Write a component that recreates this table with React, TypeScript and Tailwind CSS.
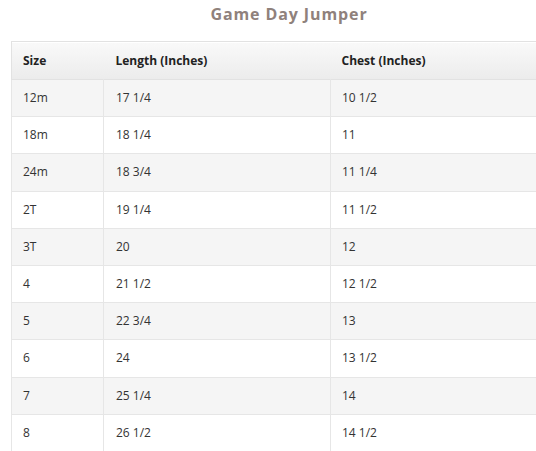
const rows: [string, string, string][] = [
  ["12m", "17 1/4", "10 1/2"],
  ["18m", "18 1/4", "11"],
  ["24m", "18 3/4", "11 1/4"],
  ["2T", "19 1/4", "11 1/2"],
  ["3T", "20", "12"],
  ["4", "21 1/2", "12 1/2"],
  ["5", "22 3/4", "13"],
  ["6", "24", "13 1/2"],
  ["7", "25 1/4", "14"],
  ["8", "26 1/2", "14 1/2"],
];

export default function App() {
  return (
    <div className="w-[536px] h-[451px] overflow-hidden bg-white font-['Open_Sans',sans-serif]">
      <div className="w-[578px]">
        <h2 className="h-[41px] pt-[3px] text-center text-[16px] font-bold leading-[22px] tracking-[0.9px] text-[#8f817c]">
          Game Day Jumper
        </h2>
        <table className="ml-[11px] w-[560px] border-collapse text-[12px] text-[#333]">
          <thead>
            <tr className="h-[38px] border border-[#e2e2e2] bg-gradient-to-b from-[#f9f9f9] to-[#ececec] shadow-[inset_0_1px_0_#fff]">
              <th className="w-[92px] pl-[11px] text-left font-bold text-[#222]">Size</th>
              <th className="w-[227px] pl-[12px] text-left font-bold text-[#222]">Length (Inches)</th>
              <th className="pl-[11px] text-left font-bold text-[#222]">Chest (Inches)</th>
            </tr>
          </thead>
          <tbody>
            {rows.map(([size, length, chest], i) => (
              <tr
                key={size}
                className={`h-[37.2px] border border-[#e6e6e6] ${i % 2 === 0 ? "bg-[#f5f5f5]" : "bg-white"}`}
              >
                <td className="pl-[11px]">{size}</td>
                <td className="border-l border-[#e6e6e6] pl-[12px]">{length}</td>
                <td className="border-l border-[#e6e6e6] pl-[11px]">{chest}</td>
              </tr>
            ))}
          </tbody>
        </table>
      </div>
    </div>
  );
}
